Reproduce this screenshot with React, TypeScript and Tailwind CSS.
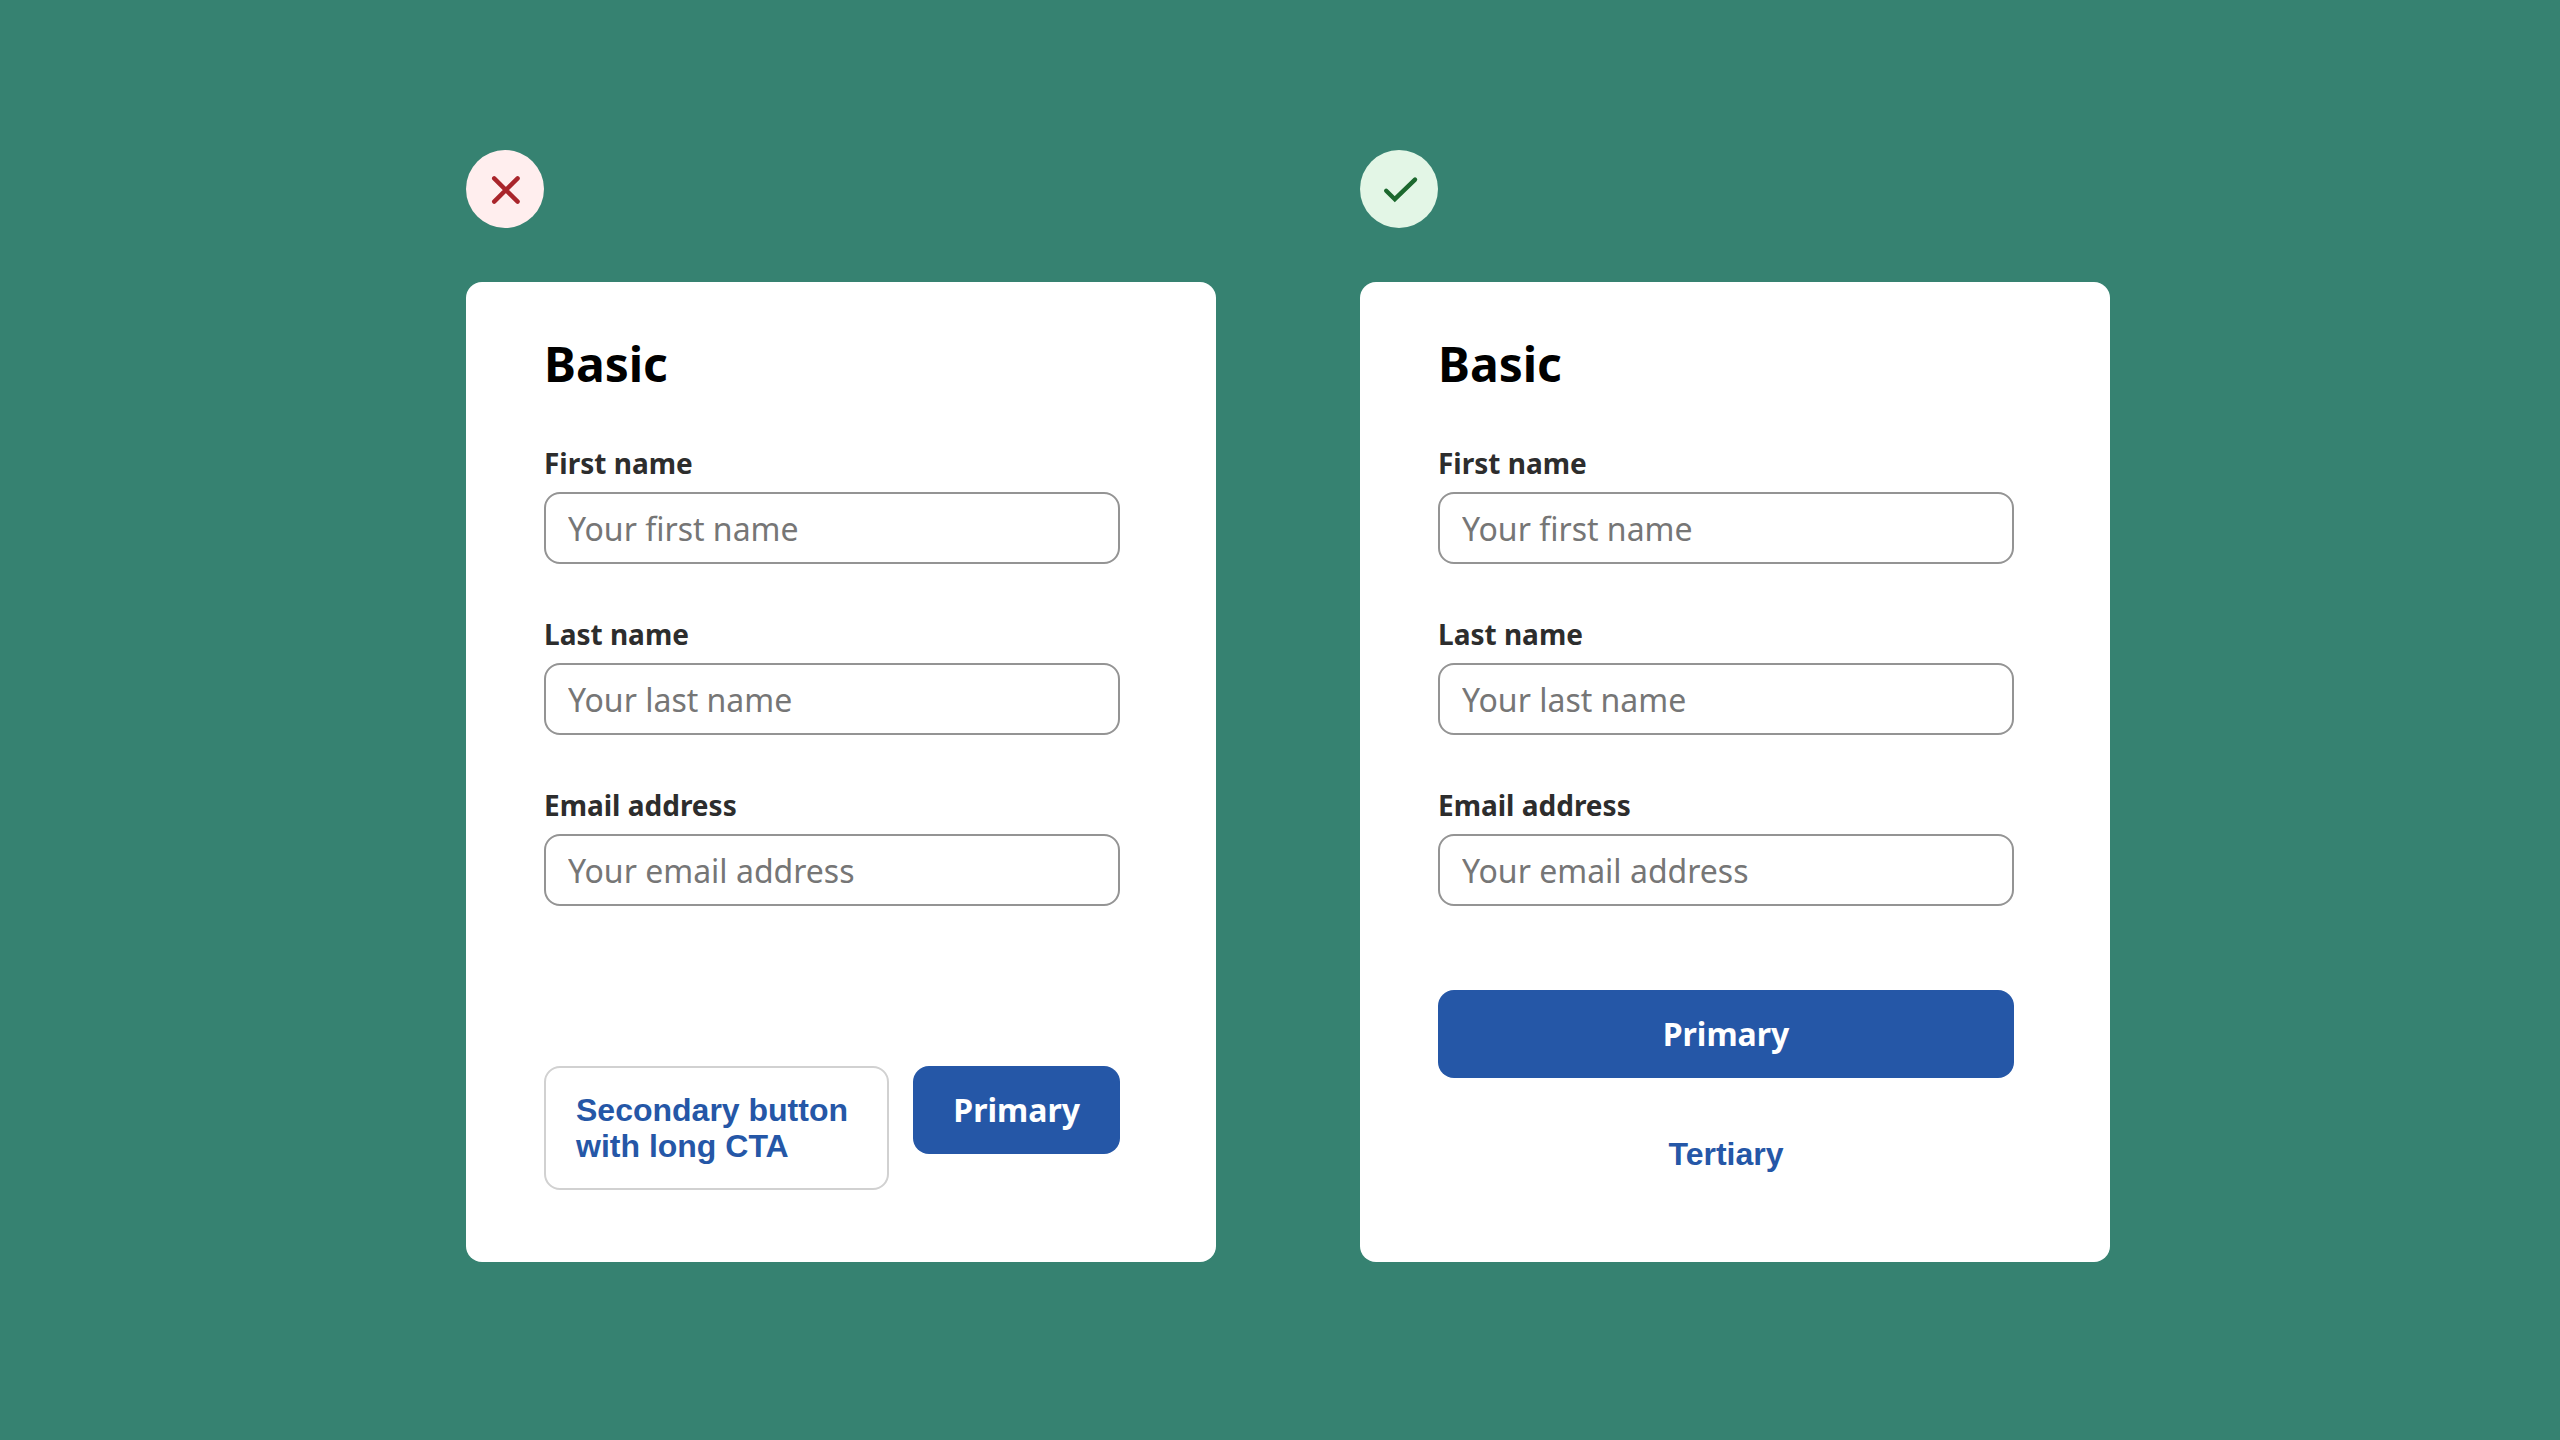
import React from 'react';

const fields = [
  { name: 'first-name', type: 'text', label: 'First name', placeholder: 'Your first name' },
  { name: 'last-name', type: 'text', label: 'Last name', placeholder: 'Your last name' },
  { name: 'email', type: 'email', label: 'Email address', placeholder: 'Your email address' },
];

const CrossIcon: React.FC = () => (
  <svg
    className="size-full"
    viewBox="0 0 78 78"
    fill="none"
    stroke="#a9252b"
    strokeWidth="4.4"
    strokeLinecap="round"
    aria-hidden="true"
  >
    <path d="M28.2 28.4L51.6 51.6M51.6 28.4L28.2 51.6" />
  </svg>
);

const CheckIcon: React.FC = () => (
  <svg
    className="size-full"
    viewBox="0 0 78 78"
    fill="none"
    stroke="#1c682e"
    strokeWidth="4.4"
    strokeLinecap="round"
    aria-hidden="true"
  >
    <path d="M26.2 40.8L34.8 49.2L55 29.6" />
  </svg>
);

const PrimaryButton: React.FC<{ className?: string }> = ({ className = '' }) => (
  <button
    type="submit"
    className={`h-[88px] rounded-2xl bg-[#2557a7] text-[32px] leading-10 font-bold text-white ${className}`}
  >
    Primary
  </button>
);

type ExampleProps = {
  id: string;
  verdict: React.ReactNode;
  verdictClass: string;
  children: React.ReactNode;
};

const Example: React.FC<ExampleProps> = ({ id, verdict, verdictClass, children }) => (
  <section className="flex flex-col gap-[54px]">
    <div className={`size-[78px] rounded-full ${verdictClass}`}>{verdict}</div>
    <form
      className="flex grow flex-col rounded-2xl bg-white pt-[50px] pr-24 pb-16 pl-[78px]"
      onSubmit={(e) => e.preventDefault()}
    >
      <h2 className="mb-12 text-5xl leading-[64px] font-bold text-black">Basic</h2>
      <div className="flex flex-col gap-[51px]">
        {fields.map((field) => (
          <div key={field.name} className="flex flex-col gap-2.5">
            <label htmlFor={`${id}-${field.name}`} className="text-[28px] leading-[38px] font-bold text-[#2d2d2d]">
              {field.label}
            </label>
            <input
              id={`${id}-${field.name}`}
              type={field.type}
              placeholder={field.placeholder}
              className="h-[72px] w-full rounded-2xl border-2 border-[#949494] bg-white px-[22px] text-[32px] text-[#2d2d2d] placeholder:text-[#767676]"
            />
          </div>
        ))}
      </div>
      {children}
    </form>
  </section>
);

const App: React.FC = () => {
  return (
    <main className="flex min-h-screen justify-center bg-[#368271] pt-[150px] pb-24 pl-4 font-['Noto_Sans',sans-serif]">
      <div className="grid w-full max-w-[1644px] grid-cols-2 gap-36 self-start">
        <Example id="avoid" verdict={<CrossIcon />} verdictClass="bg-[#ffeeee]">
          <div className="mt-40 flex items-start gap-6">
            <button
              type="button"
              className="grow rounded-2xl border-2 border-[#d1d1d1] px-[30px] py-6 text-left font-['Liberation_Sans',sans-serif] text-[32px] leading-9 font-bold text-[#2557a7]"
            >
              Secondary button
              <br />
              with long CTA
            </button>
            <PrimaryButton className="px-10" />
          </div>
        </Example>

        <Example id="prefer" verdict={<CheckIcon />} verdictClass="bg-[#e3f6e6]">
          <div className="mt-[84px] flex flex-col gap-8">
            <PrimaryButton />
            <button
              type="button"
              className="h-[88px] rounded-2xl font-['Liberation_Sans',sans-serif] text-[32px] leading-9 font-bold text-[#2557a7]"
            >
              Tertiary
            </button>
          </div>
        </Example>
      </div>
    </main>
  );
};

export default App;
